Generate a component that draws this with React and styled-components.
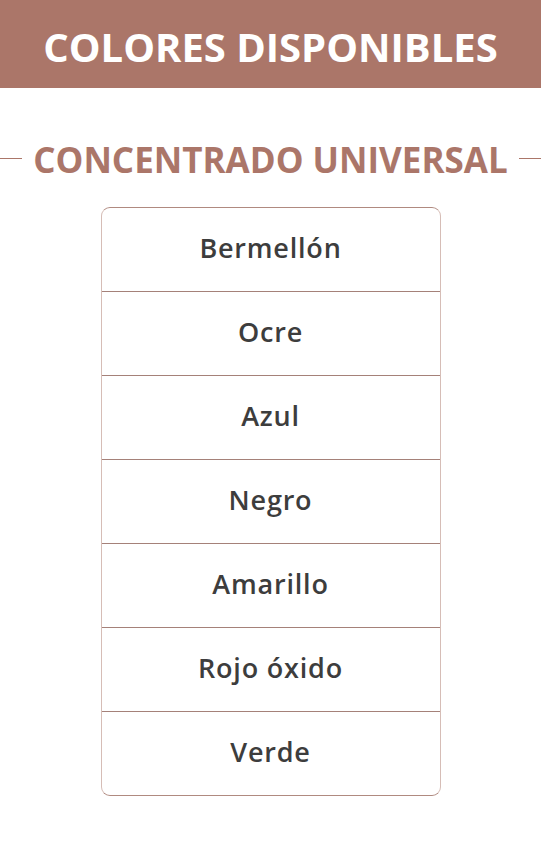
import styled, { createGlobalStyle } from "styled-components";

const GlobalStyle = createGlobalStyle`
  body {
    margin: 0;
    background: #ffffff;
    font-family: 'Open Sans', sans-serif;
  }
`;

const Page = styled.div`
  width: 541px;
  min-height: 846px;
  display: flex;
  flex-direction: column;
  align-items: center;
`;

const Banner = styled.header`
  width: 100%;
  height: 88px;
  background-color: #ab7669;
  display: flex;
  align-items: center;
  justify-content: center;
`;

const BannerTitle = styled.h1`
  margin: 0;
  color: #ffffff;
  font-size: 40px;
  font-weight: 700;
  line-height: 44px;
  padding-top: 6px;
`;

const SectionHead = styled.div`
  width: 100%;
  margin-top: 53px;
  display: flex;
  align-items: center;
  gap: 11px;
`;

const Rule = styled.span`
  flex: 1;
  height: 1px;
  margin-top: -4px;
  background-color: #ab7669;
`;

const SectionTitle = styled.h2`
  margin: 0;
  color: #ab7669;
  font-size: 35px;
  font-weight: 700;
  line-height: 38px;
`;

const List = styled.ul`
  list-style: none;
  margin: 28px 0 0 0;
  padding: 0;
  width: 340px;
  box-sizing: border-box;
  border: 1px solid #b08a80;
  border-left-color: #d6bdb6;
  border-right-color: #d6bdb6;
  border-radius: 9px;
  overflow: hidden;
`;

const Item = styled.li`
  height: 79px;
  padding-bottom: 4px;
  display: flex;
  align-items: center;
  justify-content: center;
  font-size: 27px;
  font-weight: 600;
  letter-spacing: 0.8px;
  color: #3d3d3d;
  border-top: ${(p) => (p.$first ? "none" : "1px solid #a58179")};
`;

const colores = [
  "Bermellón",
  "Ocre",
  "Azul",
  "Negro",
  "Amarillo",
  "Rojo óxido",
  "Verde",
];

const App = () => {
  return (
    <>
      <GlobalStyle />
      <Page>
        <Banner>
          <BannerTitle>COLORES DISPONIBLES</BannerTitle>
        </Banner>
        <SectionHead>
          <Rule />
          <SectionTitle>CONCENTRADO UNIVERSAL</SectionTitle>
          <Rule />
        </SectionHead>
        <List>
          {colores.map((c, i) => (
            <Item key={c} $first={i === 0}>
              {c}
            </Item>
          ))}
        </List>
      </Page>
    </>
  );
};

export default App;
